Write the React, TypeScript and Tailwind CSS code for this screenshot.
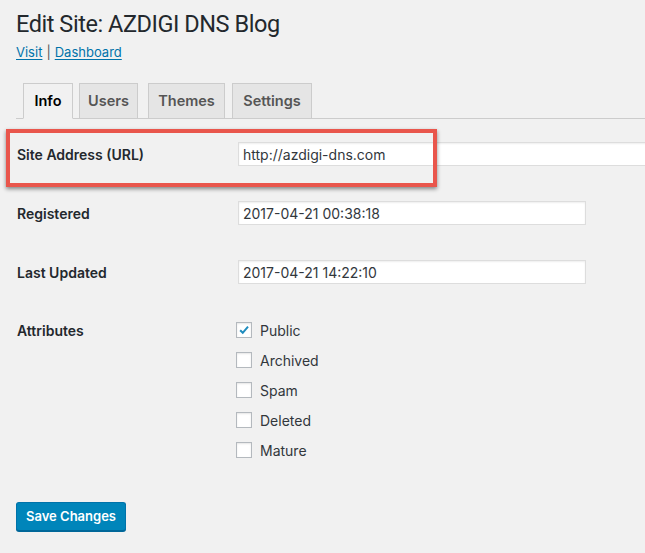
import React from "react";

const tabs = [
  { name: "Info", w: "w-[50px]", active: true, ml: "ml-[7px]" },
  { name: "Users", w: "w-[59px]", active: false, ml: "ml-[6px]" },
  { name: "Themes", w: "w-[77px]", active: false, ml: "ml-[10px]" },
  { name: "Settings", w: "w-[80px]", active: false, ml: "ml-[7px]" },
];

const attrs = [
  { name: "Public", checked: true },
  { name: "Archived", checked: false },
  { name: "Spam", checked: false },
  { name: "Deleted", checked: false },
  { name: "Mature", checked: false },
];

function Check({ checked }: { checked: boolean }) {
  return (
    <span className="relative flex h-[16px] w-[16px] items-center justify-center border border-[#b4b9be] bg-white shadow-[inset_0_1px_2px_rgba(0,0,0,0.1)]">
      {checked && (
        <svg viewBox="0 0 16 16" className="h-[16px] w-[16px]">
          <path d="M3.6 8.2 L6.6 11.2 L12.6 4.2" fill="none" stroke="#1e8cbe" strokeWidth="2.3" strokeLinecap="butt" strokeLinejoin="miter" />
        </svg>
      )}
    </span>
  );
}

export default function App() {
  return (
    <div className="relative min-h-[553px] w-full overflow-hidden bg-[#f1f1f1] font-['Inter',sans-serif] text-[#23282d]">
      <div className="pl-4 pt-[10px]">
        <h1 className="font-['Roboto',sans-serif] text-[23.5px] font-normal leading-[29px] tracking-[-0.45px] text-[#23282d]">
          Edit Site: AZDIGI DNS Blog
        </h1>
        <div className="mt-[4px] flex items-center text-[13px] leading-[18px] text-[#555]">
          <a className="text-[#0073aa] underline underline-offset-[2px]">Visit</a>
          <span className="mx-[4px]">|</span>
          <a className="text-[#0073aa] underline underline-offset-[2px]">Dashboard</a>
        </div>

        <div className="mt-[22px] flex h-[36px] items-end border-b border-[#ccc]">
          {tabs.map((t) => (
            <div
              key={t.name}
              className={`${t.w} ${t.ml} -mb-px flex h-[36px] items-center justify-center border border-[#ccc] text-[14.5px] font-semibold ${
                t.active
                  ? "border-b-[#f1f1f1] bg-[#f1f1f1] text-[#000]"
                  : "bg-[#e5e5e5] text-[#555]"
              }`}
            >
              {t.name}
            </div>
          ))}
        </div>

        <div className="mt-[23px] flex flex-col text-[14px] text-[#23282d]">
          <div className="flex h-[24px] items-center">
            <div className="w-[222px] shrink-0 pl-px font-semibold">Site Address (URL)</div>
            <div className="flex h-[24px] w-[430px] shrink-0 items-center border border-[#ddd] bg-white pl-[4px] text-[#32373c] shadow-[inset_0_1px_2px_rgba(0,0,0,0.07)]">
              http://azdigi-dns.com
            </div>
          </div>
          <div className="mt-[35px] flex h-[24px] items-center">
            <div className="w-[222px] shrink-0 pl-px font-semibold">Registered</div>
            <div className="flex h-[24px] w-[348px] shrink-0 items-center border border-[#ddd] bg-white pl-[4px] text-[#32373c] shadow-[inset_0_1px_2px_rgba(0,0,0,0.07)]">
              2017-04-21 00:38:18
            </div>
          </div>
          <div className="mt-[35px] flex h-[24px] items-center">
            <div className="w-[222px] shrink-0 pl-px font-semibold">Last Updated</div>
            <div className="flex h-[24px] w-[348px] shrink-0 items-center border border-[#ddd] bg-white pl-[4px] text-[#32373c] shadow-[inset_0_1px_2px_rgba(0,0,0,0.07)]">
              2017-04-21 14:22:10
            </div>
          </div>
          <div className="mt-[31px] flex">
            <div className="flex h-[30px] w-[222px] shrink-0 items-center pl-px font-semibold">Attributes</div>
            <div className="-ml-[2px] flex flex-col">
              {attrs.map((a) => (
                <div key={a.name} className="flex h-[30px] items-center text-[#32373c]">
                  <Check checked={a.checked} />
                  <span className="ml-[8px]">{a.name}</span>
                </div>
              ))}
            </div>
          </div>
        </div>

        <div className="mt-[37px]">
          <button className="flex h-[29px] w-[110px] items-center justify-center rounded-[3px] border border-[#0073aa] border-b-[#006799] bg-[#0085ba] text-[13px] font-semibold text-white shadow-[0_1px_0_#006799]">
            Save Changes
          </button>
        </div>
      </div>

      <div className="pointer-events-none absolute left-[6px] top-[129px] h-[58px] w-[431px] border-[4px] border-[#e9564c] shadow-[0_2px_4px_rgba(0,0,0,0.45)]" />
    </div>
  );
}
